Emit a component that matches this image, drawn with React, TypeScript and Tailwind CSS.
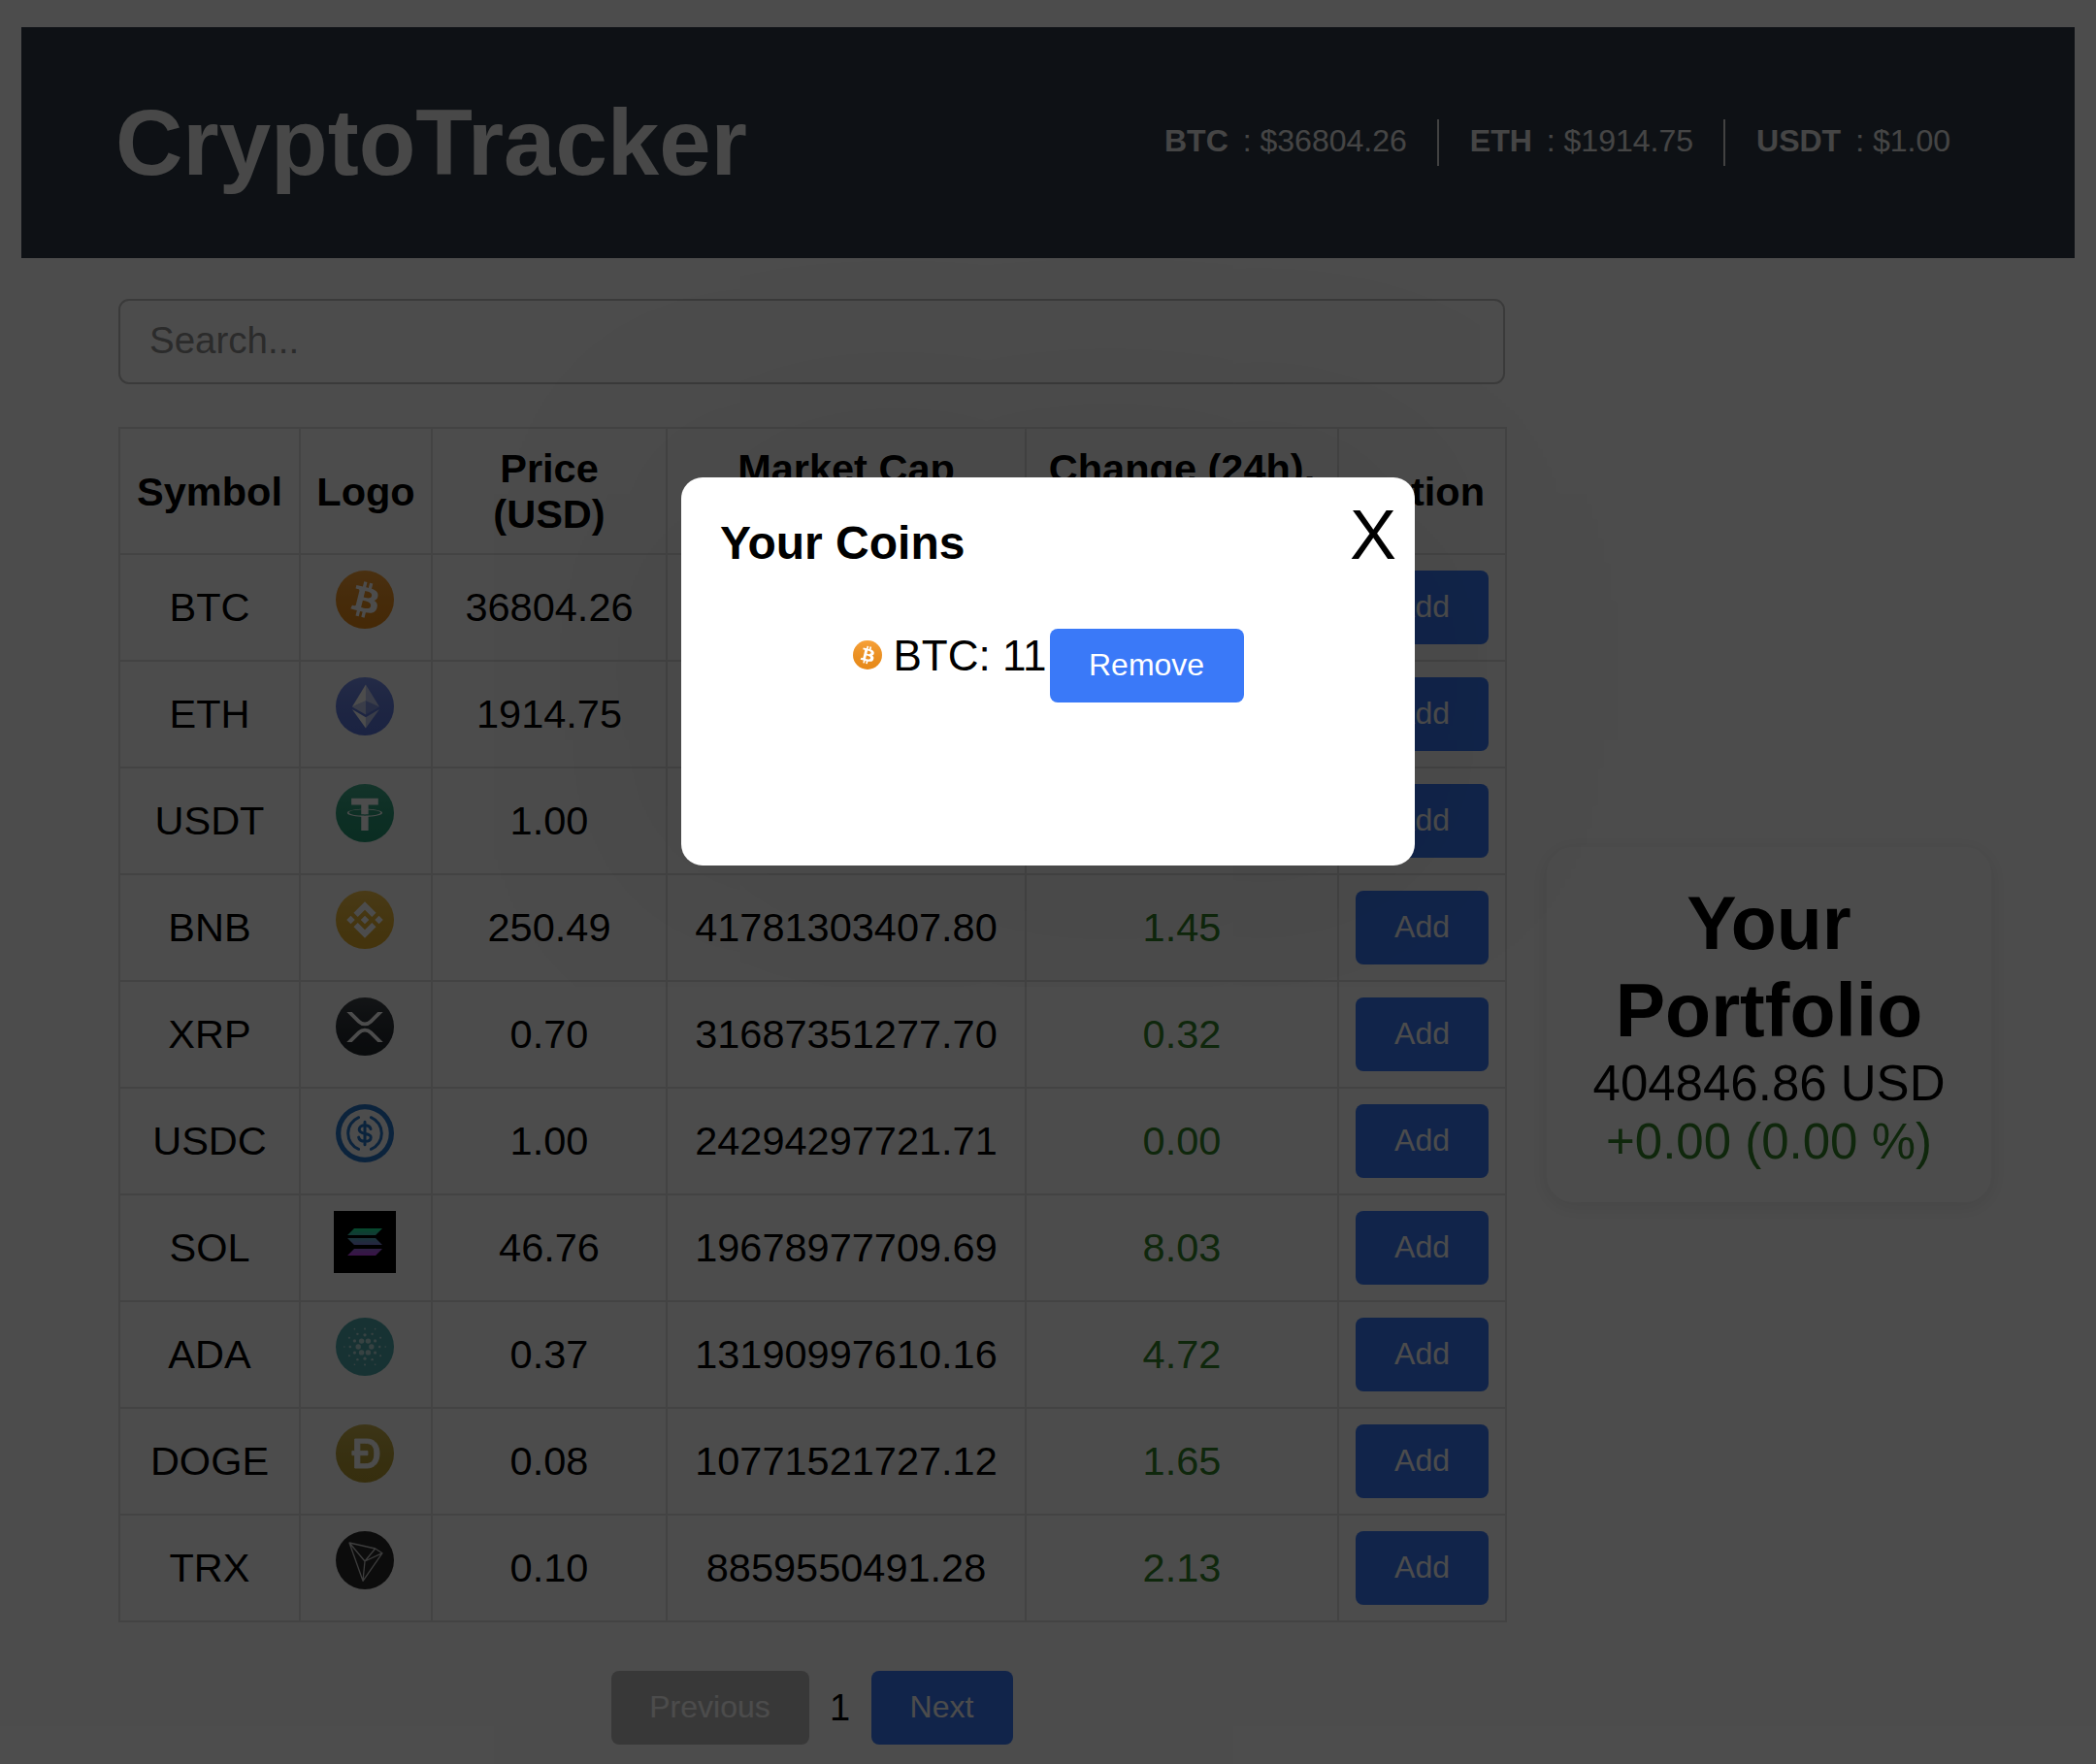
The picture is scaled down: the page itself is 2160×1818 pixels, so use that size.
import type { ReactNode } from "react"

const rows = [
  { symbol: "BTC", price: "36804.26", cap: "718921304512.33", change: "0.54" },
  { symbol: "ETH", price: "1914.75", cap: "230417765902.18", change: "0.86" },
  { symbol: "USDT", price: "1.00", cap: "87340912277.45", change: "0.03" },
  { symbol: "BNB", price: "250.49", cap: "41781303407.80", change: "1.45" },
  { symbol: "XRP", price: "0.70", cap: "31687351277.70", change: "0.32" },
  { symbol: "USDC", price: "1.00", cap: "24294297721.71", change: "0.00" },
  { symbol: "SOL", price: "46.76", cap: "19678977709.69", change: "8.03" },
  { symbol: "ADA", price: "0.37", cap: "13190997610.16", change: "4.72" },
  { symbol: "DOGE", price: "0.08", cap: "10771521727.12", change: "1.65" },
  { symbol: "TRX", price: "0.10", cap: "8859550491.28", change: "2.13" },
]

const tickers = [
  { symbol: "BTC", price: "$36804.26" },
  { symbol: "ETH", price: "$1914.75" },
  { symbol: "USDT", price: "$1.00" },
]

const adaDots = [
  { radius: 6.8, size: 2.7, count: 6, offset: 0 },
  { radius: 12.2, size: 1.6, count: 6, offset: 30 },
  { radius: 15.2, size: 1.2, count: 6, offset: 0 },
  { radius: 18.6, size: 1, count: 6, offset: 30 },
  { radius: 21.2, size: 0.8, count: 6, offset: 0 },
].flatMap((ring) =>
  Array.from({ length: ring.count }, (_, i) => {
    const angle = ((ring.offset + i * 60) * Math.PI) / 180
    return {
      cx: 30 + ring.radius * Math.cos(angle),
      cy: 30 + ring.radius * Math.sin(angle),
      r: ring.size,
    }
  }),
)

function Disc({ id, color, size, children }: { id: string; color: string; size: number; children: ReactNode }) {
  return (
    <svg width={size} height={size} viewBox="0 0 32 32" className="block">
      <defs>
        <linearGradient id={id} x1="0" y1="0" x2="0" y2="1">
          <stop offset="0" stopColor="#fff" stopOpacity="0.14" />
          <stop offset="1" stopColor="#000" stopOpacity="0.06" />
        </linearGradient>
      </defs>
      <circle cx="16" cy="16" r="16" fill={color} />
      <circle cx="16" cy="16" r="16" fill={`url(#${id})`} />
      {children}
    </svg>
  )
}

function CoinLogo({ symbol, size = 60, scope = "t" }: { symbol: string; size?: number; scope?: string }) {
  const id = `shade-${scope}-${symbol}`
  switch (symbol) {
    case "BTC":
      return (
        <Disc id={id} color="#f7931a" size={size}>
          <path fill="#fff" d="M23.189 14.02c.314-2.096-1.283-3.223-3.465-3.975l.708-2.84-1.728-.43-.69 2.765c-.454-.114-.92-.22-1.385-.326l.695-2.783L15.596 6l-.708 2.839c-.376-.086-.746-.17-1.104-.26l.002-.009-2.384-.595-.46 1.846s1.283.294 1.256.312c.7.175.826.638.805 1.006l-.806 3.235c.048.012.11.03.18.057l-.183-.045-1.13 4.532c-.086.212-.303.531-.793.41.018.025-1.256-.313-1.256-.313l-.858 1.978 2.25.561c.418.105.828.215 1.231.318l-.715 2.872 1.727.43.708-2.84c.472.127.93.245 1.378.357l-.706 2.828 1.728.43.715-2.866c2.948.558 5.164.333 6.097-2.333.752-2.146-.037-3.385-1.588-4.192 1.13-.26 1.98-1.003 2.207-2.538zm-3.95 5.538c-.533 2.147-4.148.986-5.32.695l.95-3.805c1.172.293 4.929.872 4.37 3.11zm.535-5.569c-.487 1.953-3.495.96-4.47.717l.86-3.45c.975.243 4.118.696 3.61 2.733z" />
        </Disc>
      )
    case "ETH":
      return (
        <Disc id={id} color="#627eea" size={size}>
          <g fill="#fff">
            <path fillOpacity=".602" d="M16.498 4v8.87l7.497 3.35z" />
            <path d="M16.498 4L9 16.22l7.498-3.35z" />
            <path fillOpacity=".602" d="M16.498 21.968v6.027L24 17.616z" />
            <path d="M16.498 27.995v-6.028L9 17.616z" />
            <path fillOpacity=".2" d="M16.498 20.573l7.497-4.353-7.497-3.348z" />
            <path fillOpacity=".602" d="M9 16.22l7.498 4.353v-7.701z" />
          </g>
        </Disc>
      )
    case "USDT":
      return (
        <Disc id={id} color="#26a17b" size={size}>
          <path fill="#fff" d="M17.922 17.383v-.002c-.11.008-.677.042-1.942.042-1.01 0-1.721-.03-1.971-.042v.003c-3.888-.171-6.79-.848-6.79-1.658 0-.809 2.902-1.486 6.79-1.66v2.644c.254.018.982.061 1.988.061 1.207 0 1.812-.05 1.925-.06v-2.643c3.88.173 6.775.85 6.775 1.658 0 .81-2.895 1.485-6.775 1.657m0-3.59v-2.366h5.414V7.819H8.595v3.608h5.414v2.365c-4.4.202-7.709 1.074-7.709 2.118 0 1.044 3.309 1.915 7.709 2.118v7.582h3.913v-7.584c4.393-.202 7.694-1.073 7.694-2.116 0-1.043-3.301-1.914-7.694-2.117" />
        </Disc>
      )
    case "BNB":
      return (
        <Disc id={id} color="#f3ba2f" size={size}>
          <path fill="#fff" d="M12.116 14.404L16 10.52l3.886 3.886 2.26-2.26L16 6l-6.144 6.144 2.26 2.26zM6 16l2.26-2.26L10.52 16l-2.26 2.26L6 16zm6.116 1.596L16 21.48l3.886-3.886 2.26 2.259L16 26l-6.144-6.144-.003-.003 2.263-2.257zM21.48 16l2.26-2.26L26 16l-2.26 2.26L21.48 16zm-3.188-.002h.002V16L16 18.294l-2.291-2.29-.004-.004.004-.003.401-.402.195-.195L16 13.706l2.293 2.293z" />
        </Disc>
      )
    case "XRP":
      return (
        <Disc id={id} color="#23292f" size={size}>
          <path fill="#fff" d="M23.07 8h2.89l-6.015 5.957a5.621 5.621 0 01-7.89 0L6.035 8H8.93l4.57 4.523a3.556 3.556 0 004.996 0L23.07 8zM8.895 24.563H6l6.055-5.993a5.621 5.621 0 017.89 0L26 24.562h-2.895L18.5 20a3.556 3.556 0 00-4.996 0l-4.61 4.563z" />
        </Disc>
      )
    case "USDC":
      return (
        <svg width={size} height={size} viewBox="0 0 32 32" className="block">
          <circle cx="16" cy="16" r="16" fill="#2775ca" />
          <circle cx="16" cy="16" r="13.2" fill="#fff" />
          <g fill="none" stroke="#2775ca" strokeLinecap="round">
            <path strokeWidth="1.6" d="M12.6 7.3a9.4 9.4 0 0 0 0 17.4M19.4 7.3a9.4 9.4 0 0 1 0 17.4" />
            <path strokeWidth="1.6" d="M19.2 13.6c-.3-1.3-1.5-2-3.2-2-1.8 0-3.1.9-3.1 2.3 0 3.4 6.4 1.5 6.4 4.3 0 1.4-1.4 2.2-3.3 2.2-1.8 0-3.1-.8-3.4-2.2M16 9.7v12.6" />
          </g>
        </svg>
      )
    case "SOL":
      return (
        <svg width={64} height={64} viewBox="0 0 64 64" className="block">
          <defs>
            <linearGradient id={id} x1="0" y1="0" x2="0" y2="1">
              <stop offset="0" stopColor="#14f195" />
              <stop offset="0.5" stopColor="#6f8fd0" />
              <stop offset="1" stopColor="#c23ff0" />
            </linearGradient>
          </defs>
          <rect width="64" height="64" fill="#000" />
          <path fill={`url(#${id})`} d="M21 18H50L43 25H14ZM14 28H43L50 35H21ZM21 39H50L43 46H14Z" />
        </svg>
      )
    case "ADA":
      return (
        <svg width={size} height={size} viewBox="0 0 60 60" className="block">
          <circle cx="30" cy="30" r="30" fill="#4fa9ac" />
          <g fill="#fff" fillOpacity="0.6">
            {adaDots.map((dot, i) => (
              <circle key={i} cx={dot.cx} cy={dot.cy} r={dot.r} />
            ))}
          </g>
        </svg>
      )
    case "DOGE":
      return (
        <Disc id={id} color="#c2a633" size={size}>
          <path fill="#fff" stroke="#fff" strokeWidth="0.5" d="M13.248 14.61h4.314v2.286h-4.314v4.818h2.721c1.077 0 1.958-.145 2.644-.437.686-.291 1.224-.694 1.615-1.21a4.4 4.4 0 00.796-1.815 11.4 11.4 0 00.21-2.252 11.4 11.4 0 00-.21-2.252 4.396 4.396 0 00-.796-1.815c-.391-.516-.93-.919-1.615-1.21-.686-.292-1.567-.437-2.644-.437h-2.721v4.325zm-2.766 2.286H9v-2.285h1.482V8h6.549c1.21 0 2.257.21 3.142.627.885.419 1.607.99 2.168 1.715.56.724.977 1.572 1.25 2.543.273.971.409 2.01.409 3.115a11.47 11.47 0 01-.41 3.115c-.272.97-.689 1.819-1.25 2.543-.56.725-1.282 1.296-2.167 1.715-.885.418-1.933.627-3.142.627h-6.549v-7.104z" />
        </Disc>
      )
    default:
      return (
        <svg width={size} height={size} viewBox="0 0 60 60" className="block">
          <circle cx="30" cy="30" r="30" fill="#2b2b2b" />
          <path fill="none" stroke="#fff" strokeOpacity="0.75" strokeWidth="1.3" strokeLinejoin="round" d="M14 12L40.7 18L48 22.7L28 51.3ZM14 12L30 31L48 22.7M30 31L28 51.3M40.7 18L30 31" />
        </svg>
      )
  }
}

export default function App() {
  return (
    <div className="relative min-h-[1818px] overflow-hidden bg-white px-[22px] pt-[28px] font-['Liberation_Sans',Arial,sans-serif] text-black">
      <header className="flex h-[238px] items-center justify-between bg-[#303b46] pl-[97px] pr-[128px] text-[#f2f2f2]">
        <h1 className="text-[96px] font-bold leading-none">CryptoTracker</h1>
        <div className="flex items-center text-[32px] text-[#e8e8e8]">
          {tickers.map((t, i) => (
            <div
              key={t.symbol}
              className={
                i < tickers.length - 1
                  ? "mr-[32px] flex h-[48px] items-center border-r-2 border-[#ddd] pr-[31px]"
                  : "flex h-[48px] items-center"
              }
            >
              <strong className="mb-[4px] mr-[15px] font-bold">{t.symbol}</strong>
              <span className="mb-[4px]">: {t.price}</span>
            </div>
          ))}
        </div>
      </header>

      <main className="mt-[42px] flex items-center pl-[100px]">
        <section className="w-[1429px]">
          <input
            placeholder="Search..."
            className="block h-[88px] w-full rounded-[11px] border-2 border-[#c4c4c4] px-[30px] pb-[2px] text-[38.5px] placeholder:text-[#8f8f8f]"
          />
          <table className="mt-[44px] w-full table-fixed border-collapse text-center text-[41.5px]">
            <colgroup>
              <col className="w-[186px]" />
              <col className="w-[136px]" />
              <col className="w-[242px]" />
              <col className="w-[370px]" />
              <col className="w-[322px]" />
              <col className="w-[173px]" />
            </colgroup>
            <thead>
              <tr className="h-[130px] font-bold leading-[47px]">
                <th className="border-2 border-[#e0e0e0]">Symbol</th>
                <th className="border-2 border-[#e0e0e0]">Logo</th>
                <th className="border-2 border-[#e0e0e0]">Price<br />(USD)</th>
                <th className="border-2 border-[#e0e0e0]">Market Cap<br />(USD)</th>
                <th className="border-2 border-[#e0e0e0]">Change (24h),<br />%</th>
                <th className="border-2 border-[#e0e0e0]">Action</th>
              </tr>
            </thead>
            <tbody>
              {rows.map((row) => (
                <tr key={row.symbol} className="h-[110px]">
                  <td className="border-2 border-[#e0e0e0]">{row.symbol}</td>
                  <td className="border-2 border-[#e0e0e0] pt-[16px] align-top">
                    <div className="flex justify-center pr-[2px]">
                      <CoinLogo symbol={row.symbol} />
                    </div>
                  </td>
                  <td className="border-2 border-[#e0e0e0]">{row.price}</td>
                  <td className="border-2 border-[#e0e0e0]">{row.cap}</td>
                  <td className="border-2 border-[#e0e0e0] text-[#328328]">{row.change}</td>
                  <td className="border-2 border-[#e0e0e0]">
                    <button className="mx-auto block h-[76px] w-[137px] rounded-[8px] bg-[#3a79f8] pb-[2px] text-[32px] text-white">
                      Add
                    </button>
                  </td>
                </tr>
              ))}
            </tbody>
          </table>
          <div className="mt-[50px] flex items-center justify-center text-[32px]">
            <button className="h-[76px] w-[204px] rounded-[8px] bg-[#bdbdbd] pb-[2px] text-white">Previous</button>
            <span className="w-[64px] text-center text-[38px]">1</span>
            <button className="h-[76px] w-[146px] rounded-[8px] bg-[#3a79f8] pb-[2px] text-white">Next</button>
          </div>
        </section>

        <aside className="ml-[43px] mt-[5px] w-[458px] rounded-[27px] bg-white pb-[32px] pt-[33px] text-center shadow-[0_4px_22px_rgba(0,0,0,0.1)]">
          <h2 className="text-[77px] font-bold leading-[90px]">Your<br />Portfolio</h2>
          <p className="mt-[1px] text-[51px] leading-[60px]">404846.86 USD</p>
          <p className="text-[51px] leading-[60px] text-[#328328]">+0.00 (0.00 %)</p>
        </aside>
      </main>

      <div className="absolute inset-0 flex items-start justify-center bg-black/70 pt-[492px]">
        <div className="relative h-[400px] w-[756px] rounded-[22px] bg-white pl-[40px] pt-[41px] shadow-[0_0_500px_rgba(0,0,0,0.12)]">
          <h3 className="text-[48px] font-bold leading-[54px]">Your Coins</h3>
          <button className="absolute right-[19px] top-[23px] text-[72px] leading-none">X</button>
          <div className="-ml-[40px] mt-[61px] flex items-start justify-center">
            <div className="ml-[1px] mr-[11px] mt-[12px]">
              <CoinLogo symbol="BTC" size={30} scope="m" />
            </div>
            <span className="mr-[3px] mt-[3px] text-[44px] leading-[50px]">BTC: 11</span>
            <button className="h-[76px] w-[200px] rounded-[8px] bg-[#3a79f8] pb-[2px] text-[32px] text-white">Remove</button>
          </div>
        </div>
      </div>
    </div>
  )
}
